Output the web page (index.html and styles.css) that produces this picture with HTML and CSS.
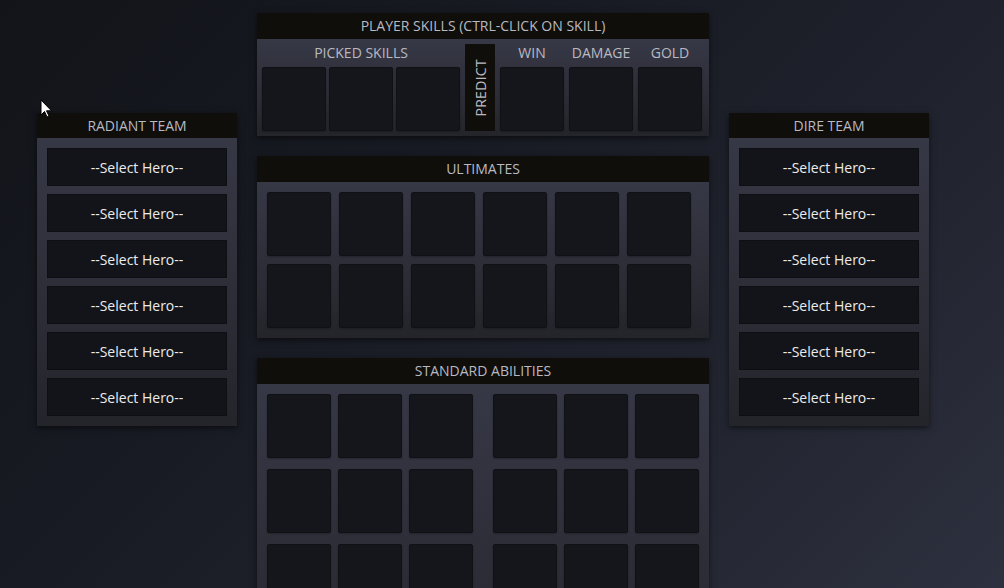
FILE: index.html
```html
<!DOCTYPE html>
<html>
<head>
<meta charset="utf-8">
<link rel="stylesheet" href="styles.css">
</head>
<body>
<div class="page">
  <section class="panel team">
    <div class="panel-head">RADIANT TEAM</div>
    <div class="panel-body team-body">
      <div class="hero">--Select Hero--</div>
      <div class="hero">--Select Hero--</div>
      <div class="hero">--Select Hero--</div>
      <div class="hero">--Select Hero--</div>
      <div class="hero">--Select Hero--</div>
      <div class="hero">--Select Hero--</div>
    </div>
  </section>

  <div class="center">
    <section class="panel">
      <div class="panel-head">PLAYER SKILLS (CTRL-CLICK ON SKILL)</div>
      <div class="panel-body player-body">
        <div class="group picked">
          <div class="labels"><span class="label wide">PICKED SKILLS</span></div>
          <div class="slots">
            <div class="slot"></div><div class="slot"></div><div class="slot"></div>
          </div>
        </div>
        <div class="predict"><span>PREDICT</span></div>
        <div class="group results">
          <div class="labels">
            <span class="label">WIN</span><span class="label">DAMAGE</span><span class="label">GOLD</span>
          </div>
          <div class="slots">
            <div class="slot"></div><div class="slot"></div><div class="slot"></div>
          </div>
        </div>
      </div>
    </section>

    <section class="panel">
      <div class="panel-head">ULTIMATES</div>
      <div class="panel-body ult-body">
        <div class="slot"></div><div class="slot"></div><div class="slot"></div>
        <div class="slot"></div><div class="slot"></div><div class="slot"></div>
        <div class="slot"></div><div class="slot"></div><div class="slot"></div>
        <div class="slot"></div><div class="slot"></div><div class="slot"></div>
      </div>
    </section>

    <section class="panel">
      <div class="panel-head">STANDARD ABILITIES</div>
      <div class="panel-body std-body">
        <div class="std-group">
          <div class="slot"></div><div class="slot"></div><div class="slot"></div>
          <div class="slot"></div><div class="slot"></div><div class="slot"></div>
          <div class="slot"></div><div class="slot"></div><div class="slot"></div>
          <div class="slot"></div><div class="slot"></div><div class="slot"></div>
        </div>
        <div class="std-group">
          <div class="slot"></div><div class="slot"></div><div class="slot"></div>
          <div class="slot"></div><div class="slot"></div><div class="slot"></div>
          <div class="slot"></div><div class="slot"></div><div class="slot"></div>
          <div class="slot"></div><div class="slot"></div><div class="slot"></div>
        </div>
      </div>
    </section>
  </div>

  <section class="panel team">
    <div class="panel-head">DIRE TEAM</div>
    <div class="panel-body team-body">
      <div class="hero">--Select Hero--</div>
      <div class="hero">--Select Hero--</div>
      <div class="hero">--Select Hero--</div>
      <div class="hero">--Select Hero--</div>
      <div class="hero">--Select Hero--</div>
      <div class="hero">--Select Hero--</div>
    </div>
  </section>
</div>

<svg class="cursor" width="13" height="20" viewBox="0 0 13 20">
  <path d="M1 1 L1 16 L4.5 12.5 L7 18 L9 17 L6.5 11.8 L11.5 11.8 Z" fill="#ffffff" stroke="#000000" stroke-width="1" stroke-linejoin="miter"/>
</svg>
</body>
</html>
```

FILE: styles.css
```css
html, body {
  margin: 0;
  padding: 0;
  height: 100%;
  overflow: hidden;
}

body {
  background: linear-gradient(135deg, #121419 0%, #171a22 35%, #20232d 65%, #2d303e 100%);
  font-family: "Open Sans", "Liberation Sans", sans-serif;
  font-size: 14px;
  color: #b9b9c2;
  position: relative;
}

.page {
  display: flex;
  align-items: flex-start;
  gap: 20px;
  padding: 13px 0 0 37px;
}

.panel {
  width: 452px;
  box-shadow: 0 2px 6px rgba(0, 0, 0, 0.55);
}

.panel-head {
  height: 26px;
  line-height: 26px;
  background: #0f0e0a;
  text-align: center;
  color: #b9b9c2;
  white-space: nowrap;
}

.panel-body {
  background: linear-gradient(#373846, #24252b);
}

.team {
  width: 200px;
  margin-top: 100px;
}

.team .panel-head {
  height: 25px;
  line-height: 25px;
}

.team-body {
  display: flex;
  flex-direction: column;
  gap: 8px;
  padding: 10px;
}

.hero {
  height: 38px;
  line-height: 38px;
  background: #131419;
  border: 1px solid #0e0f12;
  box-sizing: border-box;
  color: #ececec;
  text-align: center;
}

.center {
  display: flex;
  flex-direction: column;
  gap: 20px;
}

.slot {
  width: 64px;
  height: 64px;
  box-sizing: border-box;
  background: #15161b;
  border: 1px solid #101115;
  border-radius: 2px;
  box-shadow: 0 1px 2px rgba(0, 0, 0, 0.25);
}

.player-body {
  display: flex;
  gap: 5px;
  padding: 5px 7px 5px 5px;
}

.group {
  display: flex;
  flex-direction: column;
}

.labels {
  display: flex;
  height: 18px;
  line-height: 18px;
  margin-bottom: 5px;
  white-space: nowrap;
}

.label {
  width: 64px;
  text-align: center;
  flex: none;
}

.label.wide {
  width: 100%;
}

.results .labels {
  gap: 5px;
}

.slots {
  display: flex;
  gap: 3px;
}

.results .slots {
  gap: 5px;
}

.predict {
  width: 30px;
  height: 87px;
  background: #0f0e0a;
  display: flex;
  align-items: center;
  justify-content: center;
}

.predict span {
  writing-mode: vertical-rl;
  transform: rotate(180deg);
  letter-spacing: 0.3px;
  color: #b9b9c2;
}

.ult-body {
  display: grid;
  grid-template-columns: repeat(6, 64px);
  gap: 8px;
  padding: 10px;
}

.std-body {
  display: flex;
  gap: 20px;
  padding: 10px;
  height: 300px;
}

.std-group {
  display: grid;
  grid-template-columns: repeat(3, 64px);
  column-gap: 7px;
  row-gap: 11px;
  align-content: start;
}

.cursor {
  position: absolute;
  left: 40px;
  top: 99px;
}
```
